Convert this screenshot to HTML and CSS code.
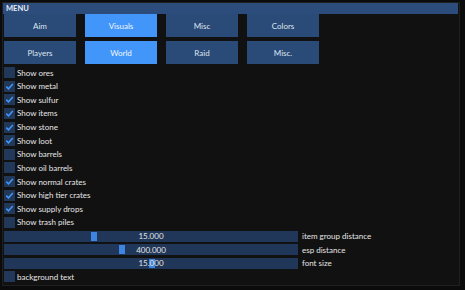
FILE: index.html
```html
<!DOCTYPE html>
<html lang="en">
<head>
  <meta charset="UTF-8">
  <title>Menu</title>
  <link rel="stylesheet" href="styles.css">
</head>
<body>
  <div class="window">
    <div class="title-bar">MENU</div>
    <div class="content">
      <div class="tabs">
        <button class="tab">Aim</button>
        <button class="tab active">Visuals</button>
        <button class="tab">Misc</button>
        <button class="tab">Colors</button>
        <button class="tab">Players</button>
        <button class="tab active">World</button>
        <button class="tab">Raid</button>
        <button class="tab">Misc.</button>
      </div>
      <div class="options">
        <label class="check-row"><span class="box"></span>Show ores</label>
        <label class="check-row"><span class="box checked"><svg viewBox="0 0 11 11"><path d="M2.3 5.6 L4.5 7.8 L8.8 3"/></svg></span>Show metal</label>
        <label class="check-row"><span class="box checked"><svg viewBox="0 0 11 11"><path d="M2.3 5.6 L4.5 7.8 L8.8 3"/></svg></span>Show sulfur</label>
        <label class="check-row"><span class="box checked"><svg viewBox="0 0 11 11"><path d="M2.3 5.6 L4.5 7.8 L8.8 3"/></svg></span>Show items</label>
        <label class="check-row"><span class="box checked"><svg viewBox="0 0 11 11"><path d="M2.3 5.6 L4.5 7.8 L8.8 3"/></svg></span>Show stone</label>
        <label class="check-row"><span class="box checked"><svg viewBox="0 0 11 11"><path d="M2.3 5.6 L4.5 7.8 L8.8 3"/></svg></span>Show loot</label>
        <label class="check-row"><span class="box"></span>Show barrels</label>
        <label class="check-row"><span class="box"></span>Show oil barrels</label>
        <label class="check-row"><span class="box checked"><svg viewBox="0 0 11 11"><path d="M2.3 5.6 L4.5 7.8 L8.8 3"/></svg></span>Show normal crates</label>
        <label class="check-row"><span class="box checked"><svg viewBox="0 0 11 11"><path d="M2.3 5.6 L4.5 7.8 L8.8 3"/></svg></span>Show high tier crates</label>
        <label class="check-row"><span class="box checked"><svg viewBox="0 0 11 11"><path d="M2.3 5.6 L4.5 7.8 L8.8 3"/></svg></span>Show supply drops</label>
        <label class="check-row"><span class="box"></span>Show trash piles</label>
        <div class="slider-row">
          <div class="slider"><span class="grab" style="left: 87px"></span><span class="value">15.000</span></div>
          <span class="slider-label">item group distance</span>
        </div>
        <div class="slider-row">
          <div class="slider"><span class="grab" style="left: 115px"></span><span class="value">400.000</span></div>
          <span class="slider-label">esp distance</span>
        </div>
        <div class="slider-row">
          <div class="slider"><span class="grab" style="left: 145px"></span><span class="value">15.000</span></div>
          <span class="slider-label">font size</span>
        </div>
        <label class="check-row"><span class="box"></span>background text</label>
      </div>
    </div>
  </div>
</body>
</html>
```

FILE: styles.css
```css
body {
  background-color: #0b0b0b;
  color: #e6e6e6;
  font-family: Lato, 'Open Sans', sans-serif;
  font-size: 8px;
  margin: 0;
  padding: 2px 0 0 2px;
}
.window {
  width: 456px;
  height: 282px;
  background-color: #111111;
  border: 1px solid #1f1f1f;
}
.title-bar {
  height: 11px;
  line-height: 11px;
  background-color: #2c4c7c;
  color: #e8ecf4;
  padding-left: 3px;
  font-weight: bold;
  font-size: 7.5px;
  margin-right: 1px;
}
.content {
  padding: 0 1px;
}
.tabs {
  display: grid;
  grid-template-columns: repeat(4, 72px);
  grid-auto-rows: 23px;
  column-gap: 9px;
  row-gap: 4px;
}
.tab {
  background-color: #2a4a78;
  border: none;
  color: #dfe5ee;
  font-family: inherit;
  font-size: 8px;
  padding: 0;
  cursor: pointer;
}
.tab.active {
  background-color: #4296fa;
  color: #f2f6fc;
}
.options {
  display: flex;
  flex-direction: column;
  gap: 2.64px;
  margin-top: 3px;
}
.check-row {
  display: flex;
  align-items: center;
  height: 11px;
  gap: 2px;
}
.box {
  width: 11px;
  height: 11px;
  background-color: #213858;
  display: inline-flex;
}
.box svg {
  width: 11px;
  height: 11px;
  fill: none;
  stroke: #4296fa;
  stroke-width: 1.5;
}
.slider-row {
  display: flex;
  align-items: center;
  height: 11px;
  gap: 4px;
}
.slider {
  position: relative;
  width: 294px;
  height: 11px;
  background-color: #203759;
  display: flex;
  align-items: center;
  justify-content: center;
}
.grab {
  position: absolute;
  top: 1px;
  width: 6px;
  height: 9px;
  background-color: #3d85e0;
}
.value {
  position: relative;
}
.slider-label {
  color: #e6e6e6;
}
```
